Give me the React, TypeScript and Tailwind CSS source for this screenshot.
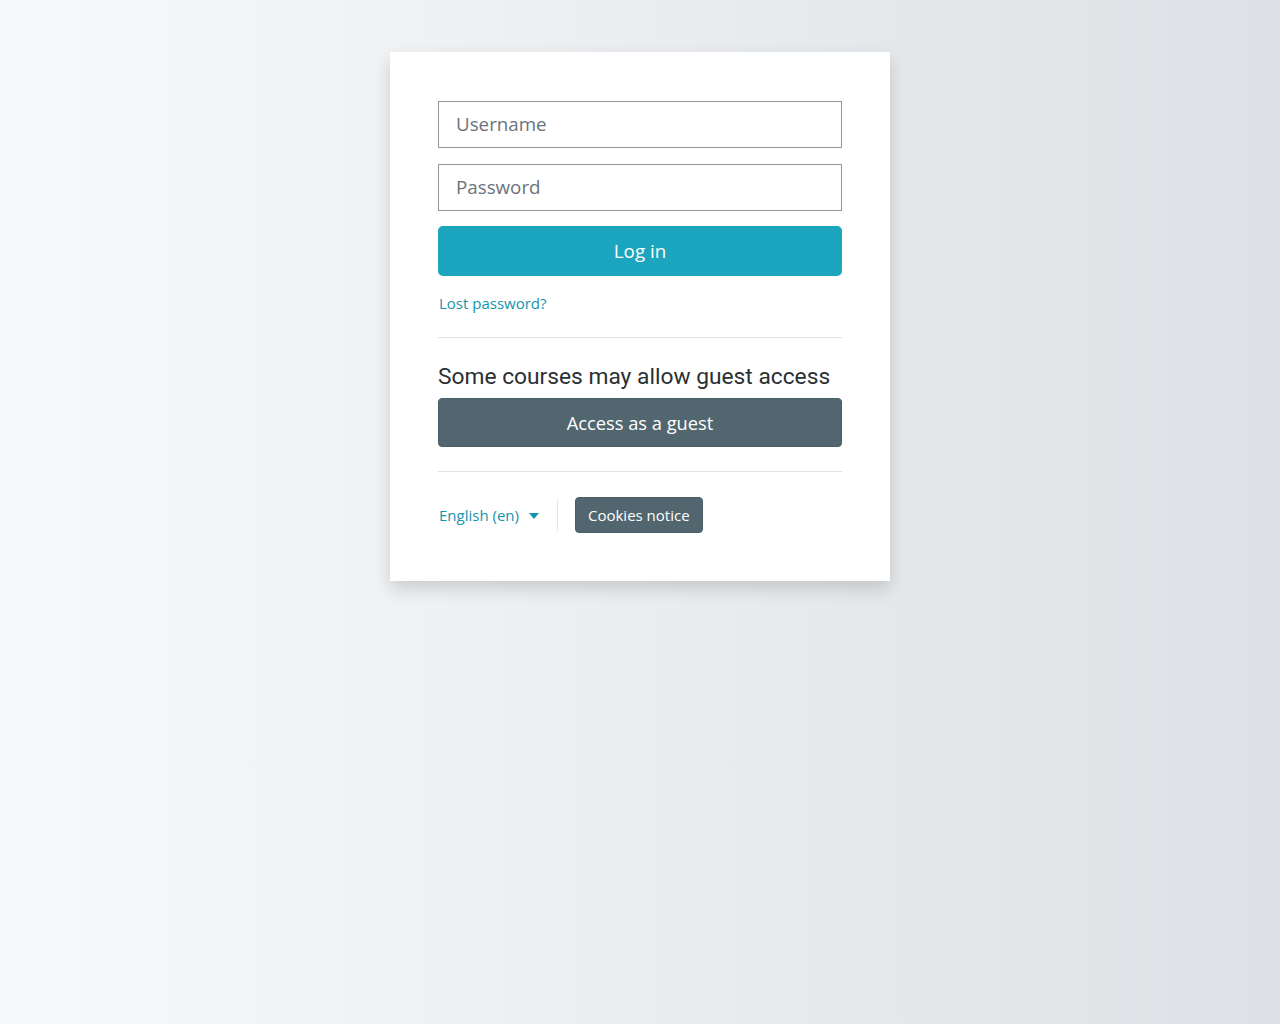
export default function App() {
  return (
    <div className="min-h-screen bg-gradient-to-r from-[#f8f9fa] to-[#dde1e5] flex justify-center pt-[52px] font-['Open_Sans',sans-serif]">
      <div className="w-[500px] h-[529px] bg-white shadow-[0_8px_16px_rgba(0,0,0,0.15)] px-12 pt-[49px]">
        <input
          type="text"
          placeholder="Username"
          className="block w-full h-[47px] border border-[#8f959e] px-[17px] pb-[2px] text-[18.75px] text-[#1d2125] placeholder:text-[#6a737b] outline-none"
        />
        <input
          type="password"
          placeholder="Password"
          className="block w-full h-[47px] mt-4 border border-[#8f959e] px-[17px] pb-[2px] text-[18.75px] text-[#1d2125] placeholder:text-[#6a737b] outline-none"
        />
        <button className="block w-full h-[50px] mt-[15px] rounded-[5px] bg-[#1ba5be] text-white text-[18.75px]">
          Log in
        </button>
        <div className="mt-[16px] h-[22px] leading-[22px] pl-px">
          <a href="#" className="text-[15px] text-[#1594aa]">Lost password?</a>
        </div>
        <hr className="mt-[23px] border-t border-[#dee2e6]" />
        <h2 className="mt-[25px] font-['Roboto',sans-serif] text-[22.75px] leading-[28px] text-[#2b2f33]">
          Some courses may allow guest access
        </h2>
        <button className="block w-full h-[49px] mt-[7px] rounded-[4px] bg-[#52666f] border border-[#4b5d66] text-white text-[18.3px]">
          Access as a guest
        </button>
        <hr className="mt-[24px] border-t border-[#dee2e6]" />
        <div className="mt-[25px] flex items-center">
          <button className="flex items-center pl-px text-[15px] text-[#1594aa]">
            English (en)
            <svg width="10" height="6" viewBox="0 0 10 6" className="ml-[10px] mt-[2px]">
              <path d="M0 0h10L5 6z" fill="#1594aa" />
            </svg>
          </button>
          <div className="w-px h-[32px] bg-[#e3e6e9] ml-[18px] mr-[17px]" />
          <button className="h-[36px] px-[12px] rounded-[4px] bg-[#52666f] border border-[#4b5d66] text-white text-[15px]">
            Cookies notice
          </button>
        </div>
      </div>
    </div>
  )
}
